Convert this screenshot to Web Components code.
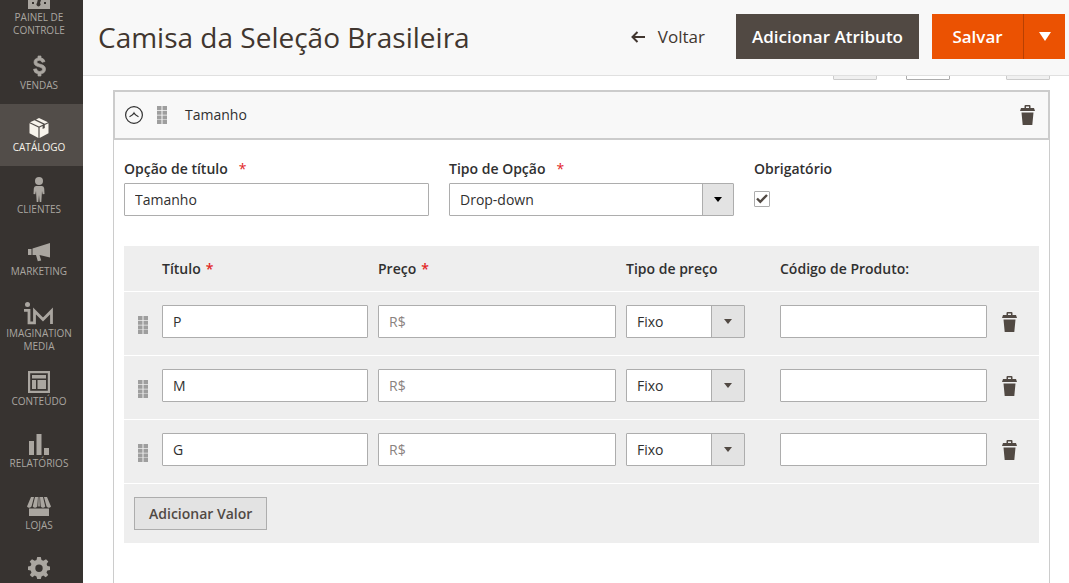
<!DOCTYPE html>
<html lang="pt-BR">
<head>
<meta charset="utf-8">
<meta name="viewport" content="width=device-width, initial-scale=1">
<title>Camisa da Seleção Brasileira</title>
<style>
  html, body { margin: 0; height: 100%; }
  body { font: 14px/20px "Open Sans", "Noto Sans", sans-serif; color: #303030; background: #fff; }
</style>
</head>
<body>
<admin-page>
  <admin-menu slot="menu">
    <menu-item icon="dashboard">Painel de Controle</menu-item>
    <menu-item icon="dollar">Vendas</menu-item>
    <menu-item icon="box" active>Catálogo</menu-item>
    <menu-item icon="person">Clientes</menu-item>
    <menu-item icon="megaphone">Marketing</menu-item>
    <menu-item icon="im">Imagination Media</menu-item>
    <menu-item icon="layout">Conteúdo</menu-item>
    <menu-item icon="bars">Relatórios</menu-item>
    <menu-item icon="store">Lojas</menu-item>
    <menu-item icon="gear"></menu-item>
  </admin-menu>
  <page-header slot="header">Camisa da Seleção Brasileira</page-header>
  <grid-pager></grid-pager>
  <option-panel heading="Tamanho">
    <option-fields></option-fields>
    <value-table values="P,M,G"></value-table>
  </option-panel>
</admin-page>

<script>
const ICONS = {
  dashboard: [22, 22, '<path fill-rule="evenodd" d="M0 0h22v22H0zM10 12l3 1-1 3a2 2 0 1 1-3 0zM4 15h2v2H4zM16 15h2v2h-2z"/>'],
  dollar: [22, 22, '<path stroke="currentColor" stroke-width=".7" d="M10 1h3v2q3 .3 4 3.500l-3 .8q-.6-2-2.700-2-2.500 0-2.500 1.700c0 3 8.700 1.300 8.700 7 0 3-2 4.500-4.500 4.800V21h-3v-2.200q-4-.4-4.500-4.500l3-.5q.5 2.700 3 2.700 3 0 3-2.200c0-3.300-8.500-1.500-8.500-7 0-2.600 1.800-4 4-4.300z"/>'],
  box: [22, 22, '<path d="M11 1l9 4.200-3.200 1.500L8 2.400zM6.500 3.200l8.800 4.300L11 9.500 2 5.200zM1.500 6.300l8.900 4.200V21l-8.900-4.700zM20.500 6.300V16.300L11.600 21V10.500l3-1.400v3l2.200-1.200V8.100z"/>'],
  person: [22, 26, '<circle cx="11" cy="4" r="4"/><path d="M8 9h6q2 0 2.200 2.500L16.500 17l-1.800.3L14 14l-.7 11h-1.600L11 18l-.7 7H8.700L8 14l-.7 3.300L5.500 17l.3-5.500Q6 9 8 9z"/>'],
  megaphone: [22, 22, '<path d="M0 8h3.500v6H0zM4.500 7.500L22 2v14.500L11.500 14l1.700 5.500-3.400.8L8 14H4.500z"/>'],
  im: [32, 24, '<circle cx="4.500" cy="2.500" r="2.500"/><path fill="none" stroke="currentColor" stroke-width="2.800" d="M1 8.300h5v12.500h5.500V9l8.500 8.500L28.500 9v13"/>'],
  layout: [22, 22, '<path fill-rule="evenodd" d="M0 0h22v22H0zM2.200 2.200v17.600h17.600V2.200z"/><path d="M4 4h14v3.500H4zM4 9h4v9H4zM9.500 9H18v9H9.500z"/>'],
  bars: [22, 22, '<path d="M1 8h5v14H1zM8.500 1h5v21h-5zM16 15h5v7h-5z"/>'],
  store: [24, 22, '<path d="M4 2h3L4.500 11.500Q2 14 0 11.500zM8 2h3l-.7 9.500q-2.200 2.500-4.600 0zM13 2h3l2.300 9.500q-2.300 2.500-4.600 0zM17 2h3l4 9.500q-2 2.500-4.500 0zM11.500 2h1l.3 9.500h-1.600zM2 13.500h20V21H2z"/>'],
  gear: [22, 22, '<path fill-rule="evenodd" d="M9.200 0h3.600l.7 3 1.800.8L18 2.200l2.300 2.400L18.600 7l.8 1.900 2.600.6v3.400l-2.700.6-.8 1.900 1.700 2.500-2.500 2.400-2.400-1.700-1.800.8-.7 2.600H9.200l-.7-2.600-1.800-.8-2.400 1.700-2.500-2.400 1.700-2.500-.8-1.900L0 12.900V9.500l2.600-.6.8-1.900L1.700 4.600 4 2.200l2.700 1.600L8.500 3zM11 7.500a3.700 3.700 0 1 0 0 7.400 3.700 3.700 0 1 0 0-7.400z"/>'],
  trash: [15, 20, '<path fill-rule="evenodd" d="M4.500 3V1q0-1 1-1h4q1 0 1 1v2H14l1 3H0l1-3zM6 1.500V3h3V1.500zM1.500 7.500h12L12.300 20H2.700z"/>'],
  grip: [10, 18, '<path d="M0 0h4.500v4H0zM5.500 0H10v4H5.500zM0 4.700h4.500v4H0zM5.500 4.700H10v4H5.500zM0 9.400h4.500v4H0zM5.500 9.400H10v4H5.500zM0 14h4.500v4H0zM5.500 14H10v4H5.500z"/>'],
  collapse: [18, 18, '<g fill="none" stroke="currentColor"><circle cx="9" cy="9" r="8.400" stroke-width="1.200"/><path d="M4.500 10.800Q8 9.200 9 7q1 2.200 4.500 3.800" stroke-width="1.200"/></g>'],
  back: [14, 12, '<path fill="none" stroke="currentColor" stroke-width="2" d="M14 6H1.500M6.500 1l-5 5 5 5"/>'],
  down: [12, 9, '<path d="M0 0h12L6 9z"/>'],
  caret: [8, 5, '<path d="M0 0h8L4 5z"/>'],
  check: [12, 10, '<path fill="none" stroke="currentColor" stroke-width="2.400" d="M1 4.500l3.300 3.300L11 1"/>']
};

/* Registers an element whose shadow root is cloned from a template. */
function define(name, html, setup) {
  const template = document.createElement('template');
  template.innerHTML = '<style>*{box-sizing:border-box}</style>' + html;
  customElements.define(name, class extends HTMLElement {
    connectedCallback() {
      if (this.shadowRoot) return;
      const root = this.attachShadow({ mode: 'open' });
      root.append(template.content.cloneNode(true));
      if (setup) setup(this, root);
    }
  });
}

define('ui-icon', `<style>:host{display:inline-flex;flex:none} svg{display:block;fill:currentColor}</style>`, (el, root) => {
  const [w, h, body] = ICONS[el.getAttribute('name')];
  const holder = document.createElement('template');
  holder.innerHTML = `<svg width="${w}" height="${h}" viewBox="0 0 ${w} ${h}" aria-hidden="true">${body}</svg>`;
  root.append(holder.content);
});

define('admin-page', `
<style>
  :host { display: grid; grid-template-columns: 83px minmax(0, 1fr); height: 100vh; overflow: hidden; }
  .column { display: flex; flex-direction: column; min-height: 0; }
  main { flex: 1; display: flex; flex-direction: column; min-height: 0; overflow: hidden; padding: 0 19px 0 30px; }
</style>
<slot name="menu"></slot>
<div class="column"><slot name="header"></slot><main><slot></slot></main></div>`);

define('admin-menu', `
<style>
  :host { display: block; background: #373330; overflow: hidden; min-height: 0; }
  nav { display: flex; flex-direction: column; margin-top: -26px; }
</style>
<nav aria-label="Menu principal"><slot></slot></nav>`);

define('menu-item', `
<style>
  :host { display: block; color: #aaa6a0; }
  :host([active]) { background: #524d49; color: #f7f3eb; }
  a { display: flex; flex-direction: column; align-items: center; min-height: 62px; padding: 11px 8px 5px 3px; color: inherit; text-decoration: none; text-transform: uppercase; text-align: center; font-size: 10px; line-height: 13px; }
  :host([active]) a { font-weight: 500; }
  .icon { display: flex; align-items: center; height: 26px; }
</style>
<a href="#"><span class="icon"></span><slot></slot></a>`, (el, root) => {
  const icon = document.createElement('ui-icon');
  icon.setAttribute('name', el.getAttribute('icon'));
  root.querySelector('.icon').append(icon);
  if (!el.textContent) root.querySelector('a').setAttribute('aria-label', 'Sistema');
});

define('page-header', `
<style>
  :host { display: flex; align-items: center; justify-content: space-between; height: 76px; padding: 0 4px 2px 15px; box-sizing: border-box; background: #f8f8f8; border-bottom: 1px solid #e0e0e0; position: relative; z-index: 1; flex: none; }
  h1 { margin: 0; font-size: 28px; line-height: 36px; font-weight: 400; color: #41362f; white-space: nowrap; }
  .actions { display: flex; }
  button { display: flex; align-items: center; justify-content: center; height: 45px; margin: 0; padding: 0 16px; border: 0; font: 600 17px/24px "Open Sans", sans-serif; color: #fff; white-space: nowrap; }
  .back { gap: 13px; padding: 0 31px 0 0; background: none; color: #41362f; font-weight: 500; }
  .dark { min-width: 183px; background: #514943; }
  .split { display: flex; margin-left: 13px; }
  .save { min-width: 91px; background: #eb5202; }
  .more { width: 42px; background: #eb5202; border-left: 1px solid #b84002; }
</style>
<h1><slot></slot></h1>
<div class="actions">
  <button class="back" type="button"><ui-icon name="back"></ui-icon>Voltar</button>
  <button class="dark" type="button">Adicionar Atributo</button>
  <div class="split">
    <button class="save" type="button">Salvar</button>
    <button class="more" type="button" aria-label="Mais opções"><ui-icon name="down"></ui-icon></button>
  </div>
</div>`);

define('grid-pager', `
<style>
  :host { display: flex; justify-content: flex-end; height: 33px; margin: -29px 0 10px; flex: none; }
  button, input { width: 44px; height: 33px; margin: 0; padding: 0; border: 1px solid #ccc; background: #f0f0f0; border-radius: 1px; }
  input { margin: 0 56px 0 29px; border-color: #adadad; background: #fff; }
</style>
<button type="button" aria-label="Página anterior"></button>
<input type="text" aria-label="Página atual">
<button type="button" aria-label="Próxima página"></button>`);

define('option-panel', `
<style>
  :host { display: flex; flex-direction: column; flex: 1 0 auto; }
  header { display: flex; align-items: center; height: 50px; padding: 0 13px 0 10px; background: #f8f8f8; border: 2px solid #ccc; }
  button { display: flex; margin: 0; padding: 0; border: 0; background: none; color: #303030; }
  .grip { margin: 0 18px 0 14px; color: #9e9e9e; }
  h2 { flex: 1; margin: 0; font-size: 14px; line-height: 20px; font-weight: 400; }
  .trash { color: #514943; }
  .body { flex: 1; padding: 19px 10px 60px; border: 1px solid #ccc; border-top: 0; }
</style>
<header>
  <button type="button" aria-label="Recolher"><ui-icon name="collapse"></ui-icon></button>
  <ui-icon class="grip" name="grip"></ui-icon>
  <h2></h2>
  <button class="trash" type="button" aria-label="Excluir opção"><ui-icon name="trash"></ui-icon></button>
</header>
<div class="body"><slot></slot></div>`, (el, root) => {
  root.querySelector('h2').textContent = el.getAttribute('heading');
});

const CONTROLS = `
  input[type=text], select { display: block; width: 100%; height: 33px; margin: 0; padding: 0 10px; border: 1px solid #adadad; border-radius: 1px; background: #fff; color: #303030; font: 14px/20px "Open Sans", sans-serif; appearance: none; }
  .select { position: relative; }
  .arrow { position: absolute; top: 1px; right: 1px; bottom: 1px; width: var(--arrow, 33px); display: flex; align-items: center; justify-content: center; background: #e3e3e3; border-left: 1px solid #adadad; color: var(--caret, #514943); pointer-events: none; }
  .required { color: #e22626; font-weight: 400; }`;

define('option-fields', `
<style>${CONTROLS}
  :host { display: grid; grid-template-columns: 305fr 285fr 285fr; gap: 20px; margin-bottom: 30px; --arrow: 31px; --caret: #000; }
  label { display: block; margin-bottom: 4px; font-weight: 600; }
  .required { margin-left: 11px; }
  .check { position: relative; display: flex; align-items: center; justify-content: center; width: 16px; height: 16px; margin-top: 12px; color: #514943; }
  .check input { position: absolute; inset: 0; width: 16px; height: 16px; margin: 0; appearance: none; border: 1px solid #adadad; border-radius: 1px; background: #fff; }
  .check ui-icon { position: relative; pointer-events: none; }
</style>
<div><label for="title">Opção de título<span class="required">*</span></label><input id="title" type="text" value="Tamanho"></div>
<div><label for="type">Tipo de Opção<span class="required">*</span></label>
  <div class="select"><select id="type"><option>Drop-down</option></select><span class="arrow"><ui-icon name="caret"></ui-icon></span></div></div>
<div><label for="required">Obrigatório</label>
  <div class="check"><input id="required" type="checkbox" checked><ui-icon name="check"></ui-icon></div></div>`);

define('value-table', `
<style>${CONTROLS}
  :host { display: block; background: #eee; }
  table { width: 100%; table-layout: fixed; border-collapse: separate; border-spacing: 0; }
  th, td { padding: 0 5px; text-align: left; border-bottom: 1px solid #fff; }
  th { height: 46px; font-weight: 600; white-space: nowrap; }
  td { height: 64px; padding-bottom: 4px; }
  .required { margin-left: 5px; font-weight: 600; }
  .select { width: 119px; }
  input::placeholder { color: #8a837f; opacity: 1; }
  .grip { padding: 1px 9px 0 0; color: #9e9e9e; text-align: right; }
  .grip ui-icon { vertical-align: middle; }
  .delete button { display: flex; margin: 0; padding: 0 5px; border: 0; background: none; color: #514943; }
  footer { padding: 13px 10px; }
  .add { height: 33px; margin: 0; padding: 0 14px; border: 1px solid #adadad; background: #e3e3e3; color: #514943; font: 600 14px/20px "Open Sans", sans-serif; display: block; }
</style>
<table>
  <colgroup><col style="width:33px"><col style="width:216px"><col style="width:248px"><col style="width:154px"><col style="width:217px"><col style="width:47px"></colgroup>
  <thead><tr><th></th><th>Título<span class="required">*</span></th><th>Preço<span class="required">*</span></th><th>Tipo de preço</th><th>Código de Produto:</th><th></th></tr></thead>
  <tbody></tbody>
</table>
<footer><button class="add" type="button">Adicionar Valor</button></footer>`, (el, root) => {
  root.querySelector('tbody').innerHTML = el.getAttribute('values').split(',').map(value => `
    <tr>
      <td class="grip"><ui-icon name="grip"></ui-icon></td>
      <td><input type="text" aria-label="Título" value="${value}"></td>
      <td><input type="text" aria-label="Preço" placeholder="R$"></td>
      <td><div class="select"><select aria-label="Tipo de preço"><option>Fixo</option></select><span class="arrow"><ui-icon name="caret"></ui-icon></span></div></td>
      <td><input type="text" aria-label="Código de Produto"></td>
      <td class="delete"><button type="button" aria-label="Excluir valor"><ui-icon name="trash"></ui-icon></button></td>
    </tr>`).join('');
});
</script>
</body>
</html>
